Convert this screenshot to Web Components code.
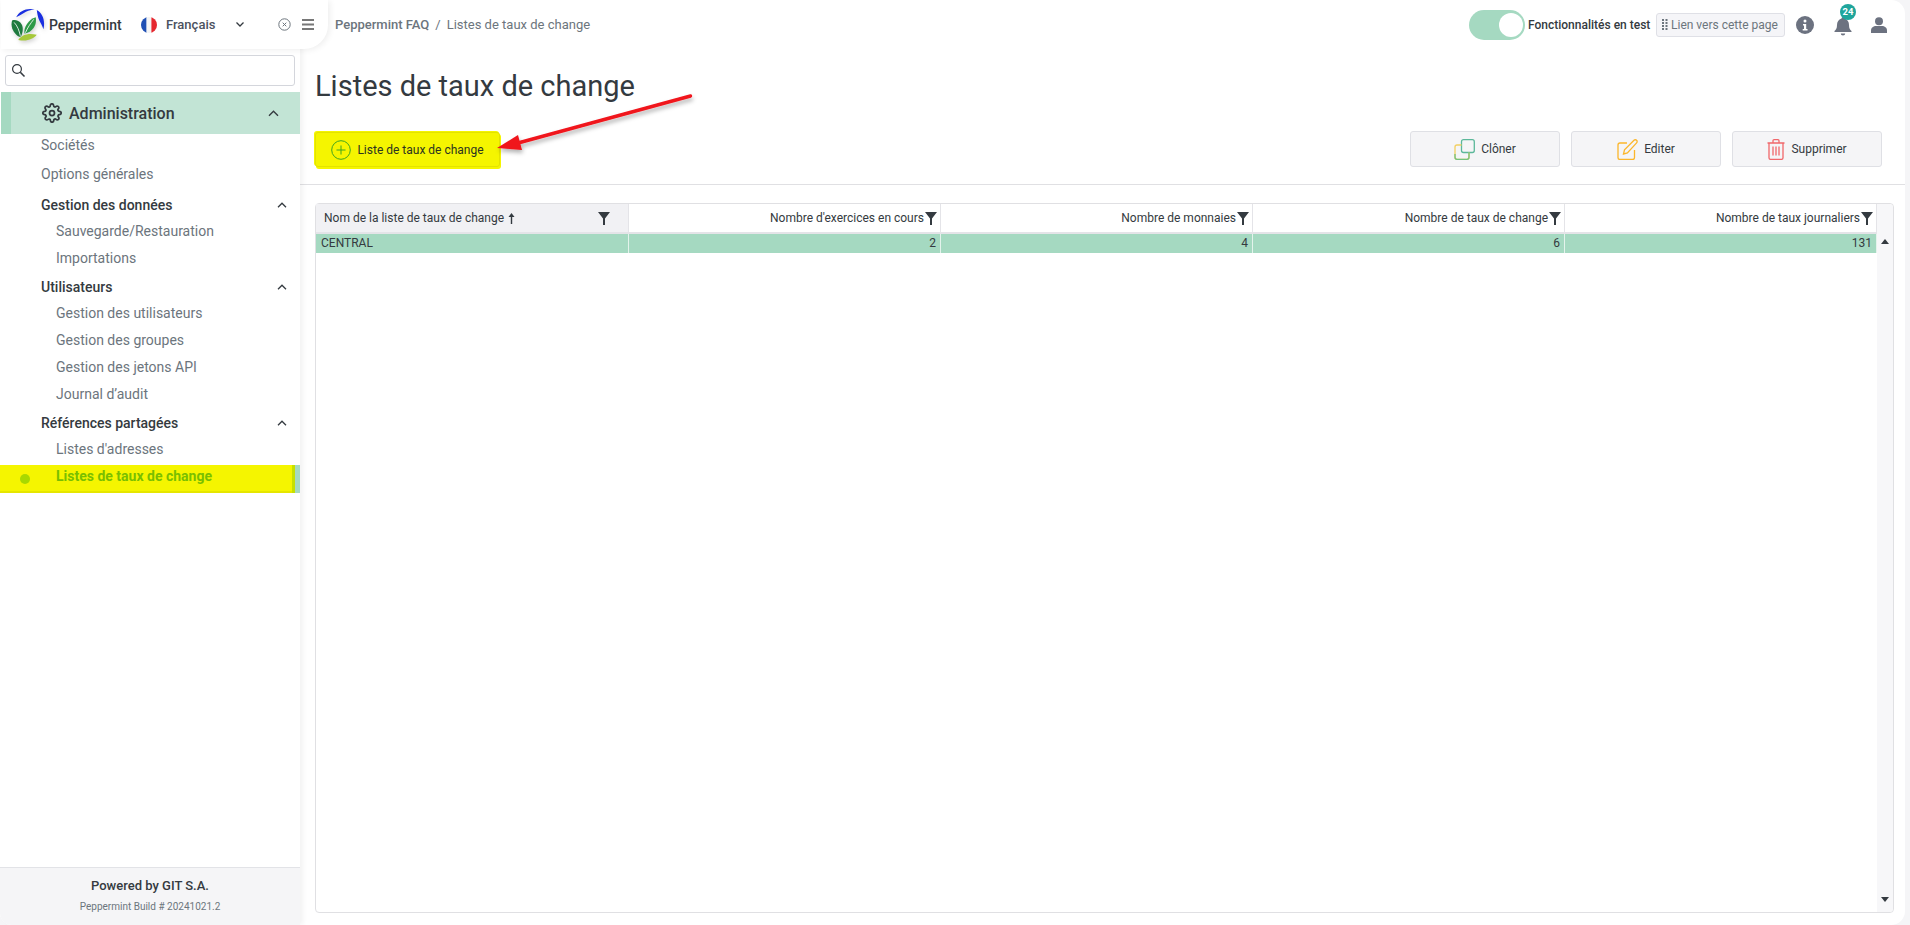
<!doctype html>
<html lang="fr">
<head>
<meta charset="utf-8">
<title>Listes de taux de change</title>
<style>
  html,body{margin:0;height:100%;overflow:hidden;background:#f5f5f7}
  body{font-family:Roboto,"Liberation Sans",sans-serif;font-size:14px;color:#343a40}
</style>
</head>
<body>
<app-shell>
  <side-bar slot="side">
    <nav-item kind="section" label="Sociétés"></nav-item>
    <nav-item kind="section" label="Options générales"></nav-item>
    <nav-item kind="group" label="Gestion des données" first></nav-item>
    <nav-item kind="link" label="Sauvegarde/Restauration" first></nav-item>
    <nav-item kind="link" label="Importations"></nav-item>
    <nav-item kind="group" label="Utilisateurs"></nav-item>
    <nav-item kind="link" label="Gestion des utilisateurs" first></nav-item>
    <nav-item kind="link" label="Gestion des groupes"></nav-item>
    <nav-item kind="link" label="Gestion des jetons API"></nav-item>
    <nav-item kind="link" label="Journal d’audit"></nav-item>
    <nav-item kind="group" label="Références partagées"></nav-item>
    <nav-item kind="link" label="Listes d'adresses" first></nav-item>
    <nav-item kind="link" label="Listes de taux de change" active></nav-item>
  </side-bar>
  <top-bar slot="top"></top-bar>
  <page-head slot="main" title-text="Listes de taux de change">
    <action-button slot="left" icon="add" marked>Liste de taux de change</action-button>
    <action-button slot="right" icon="clone">Clôner</action-button>
    <action-button slot="right" icon="edit">Editer</action-button>
    <action-button slot="right" icon="trash">Supprimer</action-button>
  </page-head>
  <rate-grid slot="main"></rate-grid>
</app-shell>

<script>
// app-shell : colonne gauche + colonne principale, la flèche rouge passe par dessus
customElements.define('app-shell', class extends HTMLElement{
  constructor(){
    super();
    this.attachShadow({mode:'open'}).innerHTML = `
      <style>
        :host{display:grid;grid-template-columns:300px 1fr;height:925px;position:relative}
        .main{display:flex;flex-direction:column;background:#fff;border-radius:0 14px 14px 0;margin-right:5px;min-width:0;height:925px}
        .arrow{position:absolute;left:0;top:0;pointer-events:none;z-index:5}
      </style>
      <slot name="side"></slot>
      <div class="main">
        <slot name="top"></slot>
        <slot name="main"></slot>
      </div>
      <svg class="arrow" width="720" height="170" viewBox="0 0 720 170">
        <defs><filter id="s" x="-10%" y="-30%" width="120%" height="170%"><feDropShadow dx="1" dy="3" stdDeviation="2" flood-color="#000" flood-opacity=".3"/></filter></defs>
        <g filter="url(#s)">
          <path d="M690.5 96 518 143" stroke="#f0141c" stroke-width="3.4" stroke-linecap="round" fill="none"/>
          <path d="M497 148 518 135 522 150Z" fill="#f0141c"/>
        </g>
      </svg>`;
  }
});

customElements.define('brand-block', class extends HTMLElement{
  constructor(){
    super();
    this.attachShadow({mode:'open'}).innerHTML = `
      <style>
        :host{display:flex;align-items:center;width:327px;height:49px;box-sizing:border-box;background:#fff;border-radius:0 0 24px 0;box-shadow:2px 1px 6px rgba(0,0,0,.07);position:relative;z-index:3}
        .logo{margin-left:8px;flex:none;filter:drop-shadow(1px 2px 2px rgba(0,0,0,.18))}
        .name{margin-left:4px;font-weight:500;font-size:14px;color:#343a40;width:92px}
        .flag{flex:none;border-radius:50%}
        .lang{margin-left:9px;font-size:13px;font-weight:500;color:#4b5260;width:57px}
        .chev{margin-left:12px}
        .x{margin-left:33px}
        .menu{margin-left:11px}
      </style>
      <svg class="logo" width="36" height="35" viewBox="0 0 35 34">
        <path d="M7 10C10 3.500 18 .5 25 2.500c-5 .2-8 2-10.500 3.400C12 7.500 9.500 8.500 7 10Z" fill="#1a2fe0"/>
        <path d="M27 3c5.500 3 8.500 10 6.500 18.500-1-3-2.500-5.500-4-8.500-1.500-3-2-6.500-2.500-10Z" fill="#1a2fe0"/>
        <path d="M3 13c3-1 6 0 8 2 3 3 3 8 1 13-1 1-1 1-2 1C5 26 1 20 3 13Z" fill="#1f7a3e"/>
        <path d="M5 15c3 3 5 8 6 13" stroke="#fff" stroke-width=".8" fill="none"/>
        <path d="M26 10c1 6-1 12-8 15-1 .4-2 .8-3 .8C14 20 19 12 26 10Z" fill="#2e9a47"/>
        <path d="M24 12c-3 4-6 8-8 13" stroke="#fff" stroke-width=".8" fill="none"/>
        <path d="M9 32c3-5 10-7 18-5-3 4-10 7-18 5Z" fill="#a6c83a"/>
      </svg>
      <span class="name">Peppermint</span>
      <svg class="flag" width="16" height="16" viewBox="0 0 16 16">
        <rect width="5.600" height="16" fill="#1f4fb4"/><rect x="5.600" width="4.800" height="16" fill="#f4f4f4"/><rect x="10.400" width="5.600" height="16" fill="#e5282f"/>
      </svg>
      <span class="lang">Français</span>
      <svg class="chev" width="10" height="7" viewBox="0 0 10 7"><path d="M1.500 1.500 5 5l3.500-3.500" fill="none" stroke="#343a40" stroke-width="1.300"/></svg>
      <svg class="x" width="13" height="13" viewBox="0 0 13 13"><circle cx="6.500" cy="6.500" r="5.700" fill="none" stroke="#6c757d"/><path d="M4.700 4.700l3.600 3.600M8.300 4.700 4.700 8.300" stroke="#6c757d"/></svg>
      <svg class="menu" width="12" height="11" viewBox="0 0 12 11"><path d="M0 1h12M0 5.500h12M0 10h12" stroke="#777" stroke-width="1.800"/></svg>`;
  }
});

customElements.define('side-bar', class extends HTMLElement{
  constructor(){
    super();
    this.attachShadow({mode:'open'}).innerHTML = `
      <style>
        :host{display:flex;flex-direction:column;width:300px;height:925px;box-sizing:border-box;background:#fff;padding-left:1px;border-radius:0 0 0 12px;box-shadow:3px 0 5px rgba(0,0,0,.05);position:relative;z-index:2}
        .search{margin:6px 5px 6px 4px;height:31px;box-sizing:border-box;border:1px solid #d4d6dc;border-radius:3px;display:flex;align-items:center;padding-left:5px;background:#fff}
        .admin{height:42px;flex:none;box-sizing:border-box;background:#c2e4d5;border-left:10px solid #a5d9c1;display:flex;align-items:center;padding-left:31px;font-size:16px;font-weight:500;color:#343a40}
        .admin span{margin-left:7px;flex:1}
        .admin .up{margin-right:21px}
        nav{flex:1;display:flex;flex-direction:column}
        footer{height:58px;flex:none;box-sizing:border-box;margin-left:-1px;background:#f5f5f7;border-top:1px solid #e2e3e7;border-radius:0 0 0 12px;text-align:center}
        .pw{font-size:13px;font-weight:500;color:#343a40;margin-top:10px;line-height:16px}
        .bd{font-size:10px;color:#6c757d;margin-top:6px;line-height:14px}
      </style>
      <brand-block></brand-block>
      <div class="search">
        <svg width="15" height="15" viewBox="0 0 15 15"><circle cx="6" cy="6" r="4.400" fill="none" stroke="#343a40" stroke-width="1.200"/><path d="M9.300 9.300l4.200 4.200" stroke="#343a40" stroke-width="1.600"/></svg>
      </div>
      <div class="admin">
        <svg width="20" height="20" viewBox="0 0 24 24" fill="none" stroke="#343a40" stroke-width="2.100" stroke-linecap="round" stroke-linejoin="round">
          <circle cx="12" cy="12" r="3"/>
          <path d="M19.400 15a1.650 1.650 0 0 0 .33 1.820l.06.06a2 2 0 1 1-2.830 2.830l-.06-.06a1.650 1.650 0 0 0-2.820 1.170V21a2 2 0 1 1-4 0v-.09a1.650 1.650 0 0 0-2.820-1.170l-.06.06a2 2 0 1 1-2.830-2.830l.06-.06a1.650 1.650 0 0 0-1.170-2.820H3a2 2 0 1 1 0-4h.09a1.650 1.650 0 0 0 1.170-2.820l-.06-.06a2 2 0 1 1 2.830-2.830l.06.06a1.650 1.650 0 0 0 2.820-1.170V3a2 2 0 1 1 4 0v.09a1.650 1.650 0 0 0 2.820 1.170l.06-.06a2 2 0 1 1 2.830 2.830l-.06.06a1.650 1.650 0 0 0 1.170 2.820H21a2 2 0 1 1 0 4h-.09a1.650 1.650 0 0 0-1.510 1Z"/>
        </svg>
        <span>Administration</span>
        <svg class="up" width="11" height="7" viewBox="0 0 11 7"><path d="M1 5.800 5.500 1.300 10 5.800" fill="none" stroke="#343a40" stroke-width="1.400"/></svg>
      </div>
      <nav><slot></slot></nav>
      <footer>
        <div class="pw">Powered by GIT S.A.</div>
        <div class="bd">Peppermint Build # 20241021.2</div>
      </footer>`;
  }
});

customElements.define('nav-item', class extends HTMLElement{
  connectedCallback(){
    if(this.shadowRoot) return;
    const kind=this.getAttribute('kind')||'link';
    const chev = kind==='group' ? `<svg width="10" height="6" viewBox="0 0 10 6"><path d="M1 5.200 5 1.200l4 4" fill="none" stroke="#343a40" stroke-width="1.300"/></svg>` : '';
    this.attachShadow({mode:'open'}).innerHTML = `
      <style>
        :host{display:block;flex:none;margin-top:5px}
        :host([kind=section]){margin-top:7px}
        :host([kind=section]:first-child){margin-top:0}
        :host([kind=group]){margin-top:7px}
        :host([kind=group][first]){margin-top:9px}
        :host([kind=link][first]){margin-top:4px}
        .row{height:22px;display:flex;align-items:center;justify-content:space-between;padding:0 13px 0 55px;font-size:14px;color:#6c757d;box-sizing:border-box;position:relative}
        :host([kind=section]) .row,:host([kind=group]) .row{padding-left:40px}
        :host([kind=group]) .row{color:#343a40;font-weight:500}
        :host([active]) .row{height:28px;padding-bottom:6px;margin-left:-1px;padding-left:56px;background:#f5f500;color:#79bf00;font-weight:700;border-right:5px solid #a5d9c1;box-shadow:inset -3px 0 0 #c6e000, inset 0 -2px 0 #e6e600}
        .dot{position:absolute;left:20px;top:9px;width:10px;height:10px;border-radius:50%;background:#a8d800}
      </style>
      <div class="row">${this.hasAttribute('active')?'<i class="dot"></i>':''}<span>${this.getAttribute('label')}</span>${chev}</div>`;
  }
});

customElements.define('top-bar', class extends HTMLElement{
  constructor(){
    super();
    this.attachShadow({mode:'open'}).innerHTML = `
      <style>
        :host{display:flex;align-items:center;height:49px;flex:none;padding-left:35px;box-sizing:border-box}
        .crumbs{flex:1;font-size:13px;color:#6c757d}
        .crumbs b{font-weight:500}
        .crumbs i{font-style:normal;margin:0 6px}
        .sw{width:56px;height:30px;border-radius:15px;background:#a5d9c1;position:relative;flex:none}
        .sw::after{content:"";position:absolute;right:2px;top:3px;width:24px;height:24px;border-radius:50%;background:#fff}
        .lab{font-size:12px;font-weight:500;color:#343a40;margin-left:3px;width:128px;white-space:nowrap}
        .lnk{height:24px;box-sizing:border-box;width:129px;border:1px solid #dfe0e6;border-radius:3px;background:#f5f5f8;display:flex;align-items:center;padding-left:5px;font-size:12px;color:#6c757d;white-space:nowrap;gap:3px;margin-right:11px}
        .ic{flex:none;display:block}
        .bell{position:relative;margin-left:18px;margin-right:17px;width:22px;height:24px}
        .bell em{position:absolute;left:8px;top:-9px;width:16px;height:16px;border-radius:50%;background:#1fa59c;color:#fff;font:700 9.500px/16px Roboto,sans-serif;text-align:center}
      </style>
      <div class="crumbs"><b>Peppermint FAQ</b><i>/</i>Listes de taux de change</div>
      <div class="sw"></div>
      <div class="lab">Fonctionnalités en test</div>
      <div class="lnk">
        <svg width="6" height="11" viewBox="0 0 6 11" fill="#6c757d"><rect width="2" height="2"/><rect x="3.500" width="2" height="2"/><rect y="3" width="2" height="2"/><rect x="3.500" y="3" width="2" height="2"/><rect y="6" width="2" height="2"/><rect x="3.500" y="6" width="2" height="2"/><rect y="9" width="2" height="2"/><rect x="3.500" y="9" width="2" height="2"/></svg>
        Lien vers cette page
      </div>
      <svg class="ic" width="18" height="18" viewBox="0 0 18 18"><circle cx="9" cy="9" r="9" fill="#6c7280"/><circle cx="9" cy="5" r="1.500" fill="#fff"/><path d="M7 8h3.200v5H11.500v1.500h-4.800V13H8V9.500H7Z" fill="#fff"/></svg>
      <div class="bell">
        <svg width="18" height="20" viewBox="0 0 18 20" style="position:absolute;left:2px;top:3px"><path d="M9 1a1.500 1.500 0 0 1 1.500 1.500C13.500 3.300 15 6 15 9c0 3.500 1 4.500 2.500 6v1H.5v-1C2 13.500 3 12.500 3 9c0-3 1.500-5.700 4.500-6.500A1.500 1.500 0 0 1 9 1Z" fill="#6c7280"/><path d="M6.800 17.500h4.400a2.200 2 0 0 1-4.400 0Z" fill="#6c7280"/></svg>
        <em>24</em>
      </div>
      <svg class="ic" width="16" height="16" viewBox="0 0 16 16" style="margin-right:18px"><circle cx="8" cy="4.200" r="4" fill="#6c7280"/><path d="M0 16v-2.500C0 10.500 2.500 9 5 9h6c2.500 0 5 1.500 5 4.500V16Z" fill="#6c7280"/></svg>`;
  }
});

customElements.define('page-head', class extends HTMLElement{
  connectedCallback(){
    if(this.shadowRoot) return;
    this.attachShadow({mode:'open'}).innerHTML = `
      <style>
        :host{display:block;flex:none;border-bottom:1px solid #e0e0e3;padding:19px 0 18px 15px;height:136px;box-sizing:border-box}
        h1{margin:0;font-size:29px;font-weight:400;line-height:36px;color:#343a40}
        .row{display:flex;justify-content:space-between;margin-top:27px;padding-right:23px}
        .r{display:flex;gap:11px}
        ::slotted([slot=left]){margin-top:1px}
      </style>
      <h1>${this.getAttribute('title-text')}</h1>
      <div class="row">
        <div><slot name="left"></slot></div>
        <div class="r"><slot name="right"></slot></div>
      </div>`;
  }
});

const ACTION_ICONS = {
  add:`<svg width="20" height="20" viewBox="0 0 20 20"><circle cx="10" cy="10" r="9.300" fill="none" stroke="#3fa51f"/><path d="M10 5.500v9M5.500 10h9" stroke="#3fa51f"/></svg>`,
  clone:`<svg width="21" height="21" viewBox="0 0 21 21" fill="none" stroke-width="1.300"><rect x="7.500" y=".7" width="12.800" height="12.800" rx="2" stroke="#5cb89a"/><path d="M7.500 6H3a2 2 0 0 0-2 2v10.300a2 2 0 0 0 2 2h10a2 2 0 0 0 2-2v-4.800" stroke="#f2cf62"/><path d="M1 15v3.300a2 2 0 0 0 2 2h10a2 2 0 0 0 2-2v-4.800" stroke="#73c27f"/></svg>`,
  edit:`<svg width="21" height="21" viewBox="0 0 21 21" fill="none" stroke="#fbb62c" stroke-width="1.300"><path d="M10 4H3a2 2 0 0 0-2 2v12.500a2 2 0 0 0 2 2h12.500a2 2 0 0 0 2-2V11"/><path d="M6.500 15l1-4.200L17 1.300a1.800 1.800 0 0 1 2.600 0 1.800 1.800 0 0 1 0 2.600L10.400 14Z"/></svg>`,
  trash:`<svg width="18" height="21" viewBox="0 0 18 21" fill="none" stroke="#f0676b" stroke-width="1.300"><path d="M.5 4h17M6 4V1.700C6 1 6.500.7 7 .7h4c.5 0 1 .3 1 1V4"/><path d="M2 4v14.800a1.600 1.600 0 0 0 1.600 1.600h10.800a1.600 1.600 0 0 0 1.600-1.600V4"/><path d="M6 7.500v9M9 7.500v9M12 7.500v9"/></svg>`,
};

customElements.define('action-button', class extends HTMLElement{
  connectedCallback(){
    if(this.shadowRoot) return;
    this.attachShadow({mode:'open'}).innerHTML = `
      <style>
        :host{display:flex;align-items:center;justify-content:center;gap:6px;width:150px;height:36px;box-sizing:border-box;background:#f5f5f7;border:1px solid #dfe0e5;border-radius:3px;font-size:12px;color:#343a40}
        :host([marked]){width:185px;height:35px;background:#f5f500;border-color:#e3e300;gap:6px;color:#2b3320;box-shadow:-1px -1px 0 #f5f500,1px 2px 0 #f5f500}
        svg{display:block}
      </style>
      ${ACTION_ICONS[this.getAttribute('icon')]||''}<slot></slot>`;
  }
});

const GRID_COLS = [
  {title:'Nom de la liste de taux de change', value:'CENTRAL', first:true},
  {title:"Nombre d'exercices en cours", value:'2'},
  {title:'Nombre de monnaies', value:'4'},
  {title:'Nombre de taux de change', value:'6'},
  {title:'Nombre de taux journaliers', value:'131'},
];
const FUNNEL = `<svg class="fn" width="12" height="13" viewBox="0 0 12 13"><path d="M0 0h12L7 6.500V13H5V6.500Z" fill="#343a40"/></svg>`;

customElements.define('rate-grid', class extends HTMLElement{
  constructor(){
    super();
    const heads = GRID_COLS.map(c=>`
      <div class="h ${c.first?'first':''}">
        <span>${c.title}</span>
        ${c.first?'<svg class="sort" width="7" height="11" viewBox="0 0 7 11"><path d="M3.500 0 6.500 4H4.200v7H2.800V4H.5Z" fill="#343a40"/></svg><u></u>':''}
        ${FUNNEL}
      </div>`).join('');
    const cells = GRID_COLS.map(c=>`<div class="c ${c.first?'first':''}">${c.value}</div>`).join('');
    this.attachShadow({mode:'open'}).innerHTML = `
      <style>
        :host{display:block;flex:1;min-height:0;margin:18px 11px 12px 15px;box-sizing:border-box;border:1px solid #e0e0e3;border-radius:4px;background:#fff;position:relative}
        .g{display:grid;grid-template-columns:313px 312px 312px 312px 312px 16px;grid-template-rows:30px 19px 1fr;height:100%;font-size:12px;color:#343a40}
        .h{display:flex;align-items:center;justify-content:flex-end;border-right:1px solid #e4e4e8;border-bottom:2px solid #e4e4e8;box-sizing:border-box;padding-right:3px;gap:1px;white-space:nowrap;min-width:0}
        .h.first{justify-content:flex-start;background:#f1f1f4;padding:0 18px 0 8px;gap:4px}
        .h u{flex:1}
        .h .fn{flex:none}
        .c{background:#a5d9c1;border-right:1px solid #e4f3ec;text-align:right;line-height:19px;padding-right:4px;box-sizing:border-box;white-space:nowrap}
        .c.first{text-align:left;padding-left:5px}
        .sc{background:#f7f7f9;grid-row:1 / 4;grid-column:6;position:relative;border-radius:0 4px 4px 0}
        .sc::before,.sc::after{content:"";position:absolute;left:4px;border:4px solid transparent}
        .sc::before{top:35px;border-top:0;border-bottom:5px solid #343a40}
        .sc::after{bottom:10px;border-bottom:0;border-top:5px solid #343a40}
        .rest{grid-column:1 / 6}
      </style>
      <div class="g">
        ${heads}<div class="sc"></div>
        ${cells}
        <div class="rest"></div>
      </div>`;
  }
});
</script>
</body>
</html>
